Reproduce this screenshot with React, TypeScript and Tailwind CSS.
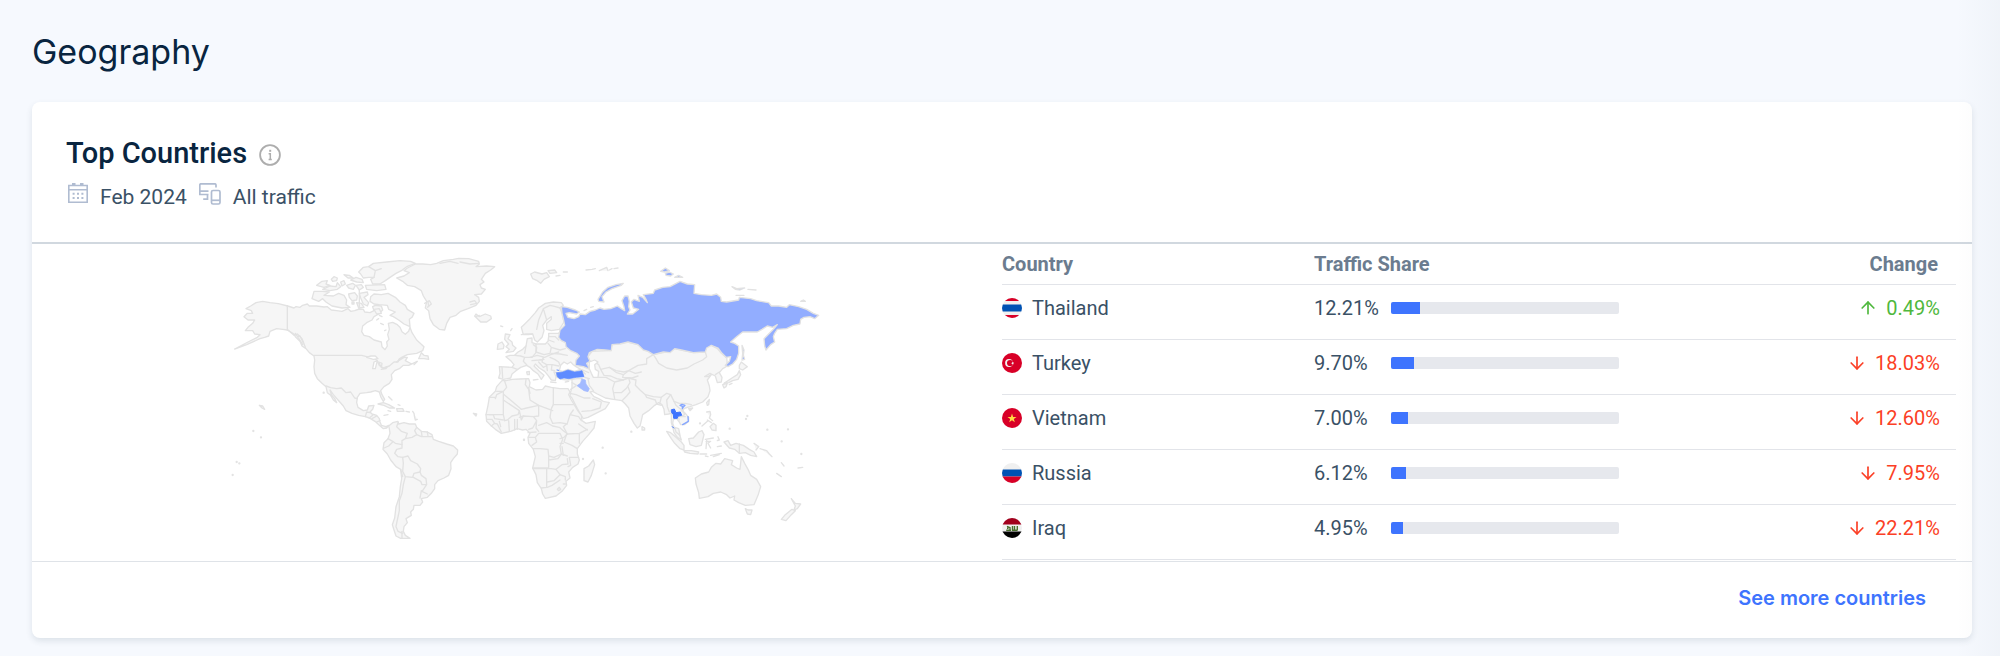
import React from 'react';
import { ArrowDown, ArrowUp } from 'lucide-react';

interface CountryRow {
  code: string;
  name: string;
  share: number;
  change: number;
}

const COUNTRIES: CountryRow[] = [
  { code: 'th', name: 'Thailand', share: 12.21, change: 0.49 },
  { code: 'tr', name: 'Turkey', share: 9.7, change: -18.03 },
  { code: 'vn', name: 'Vietnam', share: 7.0, change: -12.6 },
  { code: 'ru', name: 'Russia', share: 6.12, change: -7.95 },
  { code: 'iq', name: 'Iraq', share: 4.95, change: -22.21 },
];

const FLAGS: Record<string, React.ReactNode> = {
  th: (
    <>
      <rect width="20" height="20" fill="#f0f0f0" />
      <rect width="20" height="3" fill="#d80027" />
      <rect y="6.5" width="20" height="7" fill="#0052b4" />
      <rect y="17" width="20" height="3" fill="#d80027" />
    </>
  ),
  tr: (
    <>
      <rect width="20" height="20" fill="#d80027" />
      <circle cx="7" cy="10" r="3.9" fill="#f0f0f0" />
      <circle cx="8.1" cy="10" r="3.1" fill="#d80027" />
      <path d="M10.2 8.4l.6 1 1.2-.2-.7 1 .7 1-1.2-.3-.7.9-.1-1.2-1.1-.4 1.1-.5z" fill="#f0f0f0" />
    </>
  ),
  vn: (
    <>
      <rect width="20" height="20" fill="#d80027" />
      <path d="M10 5.600l1.100 3.300h3.400l-2.700 2 1 3.300-2.800-2-2.800 2 1-3.300-2.700-2h3.400z" fill="#ffda44" />
    </>
  ),
  ru: (
    <>
      <rect width="20" height="20" fill="#f0f0f0" />
      <rect y="6.5" width="20" height="7" fill="#0052b4" />
      <rect y="13.5" width="20" height="7" fill="#d80027" />
    </>
  ),
  iq: (
    <>
      <rect width="20" height="20" fill="#f0f0f0" />
      <rect width="20" height="6.5" fill="#a2001d" />
      <rect y="13.5" width="20" height="6.5" fill="#000" />
      <path
        d="M4.2 12.2H9M5 8.3l3 1.3v2.6M10.5 8v4.2h5M12.5 8v4.2M15.3 8v4.2M5 10.2h1.500"
        fill="none"
        stroke="#496e2d"
        strokeWidth="1.4"
      />
    </>
  ),
};

const Flag: React.FC<{ code: string }> = ({ code }) => (
  <svg viewBox="0 0 20 20" className="w-5 h-5 shrink-0" aria-hidden="true">
    <clipPath id={`flag-${code}`}>
      <circle cx="10" cy="10" r="10" />
    </clipPath>
    <g clipPath={`url(#flag-${code})`}>{FLAGS[code]}</g>
  </svg>
);

const InfoIcon: React.FC = () => (
  <svg viewBox="0 0 22 22" className="w-[22px] h-[22px]" fill="none" aria-hidden="true">
    <circle cx="11" cy="11" r="9.9" stroke="#adadad" strokeWidth="1.8" />
    <path d="M9.6 9.7h1.700v5.600M9.6 15.500h3.200" stroke="#adadad" strokeWidth="1.5" />
    <rect x="10.200" y="5.800" width="2" height="2" fill="#adadad" />
  </svg>
);

const CalendarIcon: React.FC = () => (
  <svg viewBox="0 0 20 20" className="w-5 h-5" aria-hidden="true">
    <path d="M.8 2.5h18.4v16.7H.8zM.8 6.8h18.4" fill="none" stroke="#b0bcd1" strokeWidth="1.6" />
    <path
      d="M4 0h3.5v2.5H4zM12 0h3.5v2.5H12zM4.6 9.800h2v2h-2zM9 9.800h2v2H9zM13.400 9.800h2v2h-2zM4.600 14h2v2h-2zM9 14h2v2H9zM13.400 14h2v2h-2z"
      fill="#b0bcd1"
    />
  </svg>
);

const DevicesIcon: React.FC = () => (
  <svg viewBox="0 0 22 22" className="w-[22px] h-[22px]" fill="none" stroke="#b0bcd1" strokeWidth="1.7" aria-hidden="true">
    <path d="M17 4.5V2a1.200 1.200 0 0 0-1.200-1.200H2A1.200 1.200 0 0 0 .8 2v9.500h8.700M.8 8.200h8.700M4.200 16.200h4.300v-4.500" />
    <rect x="12.5" y="7.5" width="8.500" height="13.500" rx="1.500" />
    <path d="M12.5 17.300H21" />
  </svg>
);

/* Americas, north of the tropics */
const NORTH_AMERICA = [
  'M128,184 150,188 175,191 203,198 222,204 228,200 240,202 248,196 262,192 268,198 290,198 312,201 322,200 334,210 350,212 366,214 384,206 392,214 404,212 418,207 430,208 434,216 450,218 462,212 458,200 466,196 484,198 488,210 476,222 462,230 456,240 440,248 428,258 425,275 432,286 448,290 462,300 484,306 486,320 495,329 502,318 500,306 507,298 503,284 508,268 505,250 518,247 532,254 540,262 546,275 556,283 566,274 570,262 576,278 590,300 612,320 608,332 590,340 562,344 545,352 530,366 552,352 562,352 556,362 575,372 592,364 566,376 550,376 538,386 524,392 514,404 516,418 508,430 492,440 482,452 486,464 494,478 490,484 482,470 478,456 466,452 452,456 440,458 420,460 412,472 410,488 414,502 430,512 442,510 446,498 462,496 458,508 450,516 456,522 470,526 478,536 480,546 484,556 498,560 506,556 500,564 490,566 478,556 465,544 448,534 436,530 416,526 396,520 378,512 370,498 354,480 340,464 330,450 334,464 344,476 350,488 340,480 332,466 322,458 318,440 306,430 292,416 284,400 282,380 284,360 282,348 268,338 258,326 246,318 240,304 226,290 222,282 202,270 188,268 170,266 150,274 146,288 134,292 120,296 80,314 44,327 84,306 112,292 120,284 104,282 98,272 76,272 84,262 98,250 104,240 84,240 72,230 82,220 98,220 94,212 78,206 92,198 108,188Z',
  'M586,72 608,72 632,74 650,70 670,62 700,58 716,55 746,56 776,64 778,72 768,80 800,78 824,80 812,90 796,100 784,118 792,126 780,134 784,144 796,148 784,162 764,164 776,172 778,184 768,196 744,206 722,214 708,226 690,232 680,250 674,270 658,268 640,254 630,236 626,212 616,204 620,184 610,168 604,152 584,140 562,136 548,124 530,114 552,108 568,98 552,92 562,84Z',
  'M416,96 430,82 446,80 460,70 500,66 540,62 572,64 586,70 560,80 544,92 528,100 510,112 496,122 480,132 458,132 452,118 462,112 446,112 430,114 422,102Z',
  'M452,170 462,162 484,164 504,160 526,172 540,186 556,196 562,208 582,220 576,232 568,238 570,260 552,252 536,240 520,230 510,226 526,216 506,208 502,196 478,194 462,192 450,184Z',
  'M282,154 308,154 328,156 312,166 340,168 356,160 372,166 380,180 378,194 390,202 366,204 336,198 318,186 308,176 296,184 276,176Z',
  'M290,136 306,124 322,122 318,132 330,136 312,142Z',
  'M334,118 342,110 352,114 350,122 338,124Z',
  'M372,104 388,106 400,114 384,114Z',
  'M392,120 408,112 426,118 430,128 410,126Z',
  'M308,148 330,138 348,140 352,128 362,140 352,148 330,152Z',
  'M362,126 372,122 376,132 366,138Z',
  'M380,136 398,130 406,136 400,148 386,144Z',
  'M408,136 424,134 430,142 418,150Z',
  'M436,136 494,134 498,148 470,152 440,148Z',
  'M386,162 404,158 412,168 410,180 396,182 388,172Z',
  'M418,160 442,156 444,164 432,172 446,188 442,198 430,192 422,174Z',
  'M410,188 424,190 432,202 416,204Z',
  'M396,186 402,186 402,192 396,192Z',
  'M462,208 478,206 484,220 470,222Z',
  'M470,240 476,236 M482,250 490,254 M494,272 498,270 M478,226 486,230',
  'M596,356 604,338 612,346 624,348 626,358 612,356Z',
  'M764,228 768,222 778,230 796,222 812,228 814,236 800,246 782,246 776,240Z',
  'M766,230 778,226 M590,366 582,374',
  'M474,492 490,488 506,494 524,504 508,504 492,496Z',
  'M530,506 548,506 552,514 532,514Z',
  'M504,512 512,514 M558,514 568,516 M492,526 504,524 M506,470 516,480 M534,494 540,496',
  'M578,514 582,520 584,532 586,540 592,538',
  'M118,496 128,498 134,508 126,504Z',
];

const NORTH_AMERICA_BORDERS = [
  'M202,197V270',
  'M204,270 222,286 232,282 246,296 256,322',
  'M226,280 238,298 248,314 M232,290 240,288 250,308',
  'M282,346H425L440,350 456,354 470,360 478,376 490,384 508,378 522,366 534,366 538,356 548,354',
  'M318,438 332,443 350,446 364,444 378,458 392,456 404,474 412,476',
  'M436,530 440,516 450,518 M448,534 458,526 M456,536 470,528 M470,546 480,542',
  'M418,150V208 M446,80 466,92 462,112 M466,92 484,86',
  'M614,190 628,182 634,192 622,202 M750,186 764,182 770,190 752,194',
  'M660,70 690,64 714,70 M720,66 750,72 776,70 M624,186 626,200',
];

const SOUTH_AMERICA =
  'M506,108 518,98 534,94 536,102 552,98 568,102 586,102 590,112 604,124 622,126 636,134 640,148 656,154 680,162 700,168 713,180 712,192 700,206 692,218 693,236 686,256 672,264 654,272 644,284 644,296 634,310 622,322 604,326 608,336 600,346 582,346 580,358 572,366 574,376 558,386 562,398 552,410 550,424 556,436 570,445 542,445 528,438 522,420 517,404 524,384 528,350 538,320 541,290 545,266 542,238 528,230 512,210 502,192 489,178 492,158 504,146 510,130 508,116Z';

const SOUTH_AMERICA_BORDERS = [
  'M534,98 530,110 544,124 562,130 556,146 546,152 546,164 M556,146 576,142 590,134 584,122 590,112',
  'M604,124 606,138 M622,126 624,138 M590,134 604,140 636,140',
  'M504,146 518,154 526,160 546,164 546,174 530,178 524,190 534,200 548,202 M492,174 506,168 518,156',
  'M548,202 564,198 572,212 592,222 602,236 600,246 582,250 578,262 556,260 548,244 550,220Z',
  'M556,260 550,284 546,310 538,332 538,362 532,390 528,410 534,424 548,430 M542,238 548,260',
  'M600,246 604,256 618,266 620,284 606,284 602,274 580,262 M620,284 606,304 622,312 M604,302 600,324',
  'M546,424V444',
];

const EURASIA =
  'M56,414 60,400 58,380 96,382 102,374 92,362 78,350 90,346 104,346 114,336 128,328 138,318 142,296 156,294 156,308 168,312 196,312 204,304 206,290 206,280 234,280 300,250 600,200 700,300 740,350 742,378 728,386 718,398 726,412 724,426 712,428 706,408 690,400 674,410 684,410 694,404 682,420 688,438 690,452 684,470 668,486 648,494 630,500 616,504 604,512 616,520 626,532 626,544 614,554 602,554 598,546 590,536 580,538 578,550 582,562 592,572 600,588 604,600 592,592 582,578 578,560 574,548 574,520 566,522 554,524 552,508 546,494 536,488 524,496 506,512 488,524 484,542 480,558 472,564 462,550 450,528 446,504 436,492 426,482 400,478 376,474 352,462 338,454 330,456 342,470 356,476 370,484 388,488 376,506 352,518 324,532 310,536 302,524 292,506 284,490 276,474 270,468 272,456 276,442 276,418 262,420 244,418 232,412 230,398 222,396 228,410 226,422 214,420 204,406 194,394 178,384 166,372 162,378 178,394 192,406 184,418 174,402 160,392 150,382 140,376 122,382 108,392 96,402 92,414 70,418Z';

const EURASIA_ISLANDS = [
  'M124,262 132,254 150,236 166,218 176,204 196,190 220,186 244,188 250,196 240,204 246,220 252,246 238,268 214,272 200,268 200,250 214,238 214,230 200,240 188,256 192,272 186,292 172,306 164,300 158,282 146,284 130,284Z',
  'M76,282 90,284 84,296 96,306 98,316 108,324 100,334 78,338 88,328 78,320 86,312 74,298Z',
  'M54,312 66,306 72,316 70,326 52,328Z',
  'M152,102 164,96 186,102 200,98 208,110 192,118 182,130 172,122 158,116Z',
  'M204,92 224,90 230,98 210,100Z',
  'M318,90 336,88 346,86 M358,92 380,82 384,92 M388,90 396,86 M402,86 414,84 M250,96 262,96 M228,108 240,106',
  'M140,396 148,394 148,404 142,404Z M160,420 174,418 M212,426 228,428 M256,426 266,424',
  'M768,166H792 M804,148 828,150 M62,258 68,260 M92,272 96,266',
  'M778,376 784,366 802,380 788,390 778,386Z',
  'M778,392 782,404 774,418 758,422 746,428 732,430 756,414 772,404Z',
  'M728,434 742,430 738,440 732,444Z',
  'M748,434 756,430',
  'M680,488 688,478 686,494 682,496Z',
  'M626,506 638,504 630,512Z',
  'M486,560 494,564 494,570 486,570Z',
];

const EURASIA_BORDERS = [
  'M124,284 138,282 158,282 M170,268 176,240 190,206 210,196 M190,206 200,240 M210,196 226,200 240,204',
  'M66,382 68,414 M96,382 112,388 M104,346 122,348 134,352 130,364 140,374 M138,318 134,340 M160,314 170,322 168,338 156,352 134,352',
  'M168,312 168,336 192,344 210,340 214,322 204,310 M206,290 226,290 236,300 M206,300 222,306 M214,322 240,330 256,326',
  'M150,352 172,346 194,352 212,344 236,336 M156,362 176,360 192,358 M210,352 224,358 236,366 240,376 M190,352 186,366 200,374 216,374 236,378',
  'M176,366 190,382 198,378 M200,374 202,392 M216,374 214,390 224,392 M214,340 240,342 262,346',
  'M282,386 308,390 326,398 M306,392 316,402 M314,412 328,416',
  'M324,350 336,334 392,332 396,314 444,306 474,314 520,344 500,356 500,372 474,376 446,392 432,396 408,392 388,382 362,388 356,374 344,366 330,364Z',
  'M520,344 550,338 584,326 640,338 676,336 680,350 668,360 642,372 622,384 590,390 560,384 536,370 528,356Z',
  'M362,388 372,406 392,408 410,416 430,420 M388,382 410,398 430,404 446,392 466,400 484,396',
  'M430,404 428,412 456,414 474,408 M356,412 378,412 404,426 398,446 404,476 M404,426 428,420 446,414 450,428 440,444 424,458 404,458',
  'M276,418 290,416 306,416 M276,428 290,436 M290,436 272,448 M324,416 328,436 340,452 M270,460 288,464 312,474 M312,474 330,474 M338,476 364,486 360,504 334,512 306,514',
  'M446,414 468,420 466,436 480,450 496,464 520,470 544,472 560,460 572,464 582,484 598,490 616,490 634,494',
  'M444,440 450,456 440,468 426,482 M496,464 500,472 526,480 M526,480 530,492 544,496 M544,472 540,488',
  'M572,464 560,480 562,500 568,516 M582,484 588,496 600,506 610,512 614,524 606,528 M574,520 590,520 598,540 M598,530 616,530',
  'M706,404 718,396 M738,352 724,340 712,326 694,316',
];

const RUSSIA = [
  'M244,200 262,202 286,210 298,216 290,222 268,218 258,220 264,232 282,236 296,230 300,222 316,224 330,214 346,210 360,204 372,208 392,206 412,198 424,206 434,212 432,200 426,182 434,168 444,168 448,184 446,200 450,210 442,222 458,222 476,208 460,204 454,186 462,178 478,184 474,166 488,172 502,188 498,178 490,164 520,160 524,150 548,142 570,140 600,124 622,132 644,134 642,160 664,164 694,166 710,162 722,172 724,184 740,186 776,180 778,172 812,176 830,182 866,188 874,198 896,198 920,202 928,194 956,200 980,208 1000,220 1016,226 1004,236 990,230 972,232 962,238 960,252 940,256 920,266 892,268 884,280 880,290 884,306 872,314 858,330 854,318 852,296 866,282 880,268 892,254 878,262 862,258 846,268 832,276 788,276 770,290 752,306 764,310 776,318 776,340 770,358 758,372 744,380 736,376 748,364 752,350 738,352 726,340 714,324 694,316 680,324 676,336 640,338 604,330 584,326 570,338 550,336 520,344 504,334 490,330 474,314 444,306 420,312 396,314 394,332 376,330 352,328 328,338 324,350 330,364 320,370 330,388 310,380 286,376 288,360 298,348 290,340 272,332 258,320 256,308 244,302 236,292 240,270 254,256 250,236 246,220Z',
  'M354,178 368,156 384,142 408,134 430,130 424,136 396,146 378,156 366,170 372,186 356,184Z',
  'M786,316 792,330 790,346 794,358 786,360 788,340Z',
  'M542,94 556,84 568,92 554,96Z',
  'M556,100 568,96 580,102 572,108 558,106Z',
  'M584,112 596,106 608,112Z',
  'M756,140 770,146 794,144 780,150 766,148Z',
  'M962,184 970,180 976,184Z',
  'M312,212 320,208 M332,202 340,200',
];

const AFRICA =
  'M66,2 78,2 96,-2 120,-3 146,-4 150,8 148,20 168,30 188,28 196,18 214,22 240,26 264,26 270,36 266,44 274,60 284,76 292,90 304,106 306,122 318,130 346,124 342,144 326,164 308,184 292,206 292,222 298,240 294,252 278,262 266,276 270,294 258,304 260,316 246,334 228,348 196,355 188,342 184,326 172,308 168,284 158,264 166,230 160,208 146,190 144,172 150,160 138,148 128,150 112,146 92,154 64,160 46,148 32,136 20,124 18,104 24,76 28,52 46,34 50,20Z';

const AFRICA_BORDERS = [
  'M74,4 80,22 70,34 50,44 46,56 M50,34H70V42L124,88 M28,52H46 M70,42V104H28',
  'M138,-2 136,14 146,28 150,60 176,76 M124,88 140,84 176,76 M146,22 150,40 M220,24V74 M220,74H280',
  'M70,60 118,92 114,104 96,108 82,120 74,122 M176,76V108L160,110 130,108 124,120 118,92 M220,74 214,86 210,112 218,130',
  'M176,76 218,92 M18,104 40,104 44,116 70,120 M20,118 36,118 44,130 34,138 M44,130 52,132 64,156 M58,124 62,140 M86,122 88,154 M104,118 104,150 M112,118 112,148 M70,104 74,122',
  'M130,108 118,112 M160,110 170,122 158,144 146,148 M170,122 168,144 176,154 M176,136 200,128 218,138 238,142 M218,130 240,128 262,132 M238,142 250,152 260,160',
  'M280,90 270,104 262,130 250,140 262,162 298,160 322,148 M270,104 296,110 304,122 M296,132 322,150 M260,162 252,186 276,196 292,206 M298,162V190',
  'M146,172H166L176,160 M166,172 170,186 156,196 M176,160 240,160 248,178 240,200 244,222 222,232 206,228 204,208 180,206 160,206',
  'M206,228V264L158,264 M158,266 200,266 214,266 M206,240 234,236 244,222 262,228 M200,268V322L184,324 M214,266 228,268 240,284 222,302 202,306',
  'M228,268 246,254 264,252 262,236 M240,284 256,290 256,300 M246,200 250,226 M268,232 272,256 264,260 M296,232 268,232 M240,176 252,172 262,162 M240,190 250,190',
  'M144,158 168,156 M202,322 216,316 240,300 M232,328 238,322 242,328 236,332Z M250,312H256',
];

const OCEANIA = [
  'M340,240 344,254 334,286 324,306 312,302 312,266 326,258Z',
  'M646,294 664,282 686,276 694,262 708,250 722,252 734,236 758,242 754,254 770,264 780,268 784,230 794,250 804,268 812,286 830,298 842,320 834,346 822,374 796,376 776,368 762,360 764,348 750,354 740,344 722,336 700,340 684,350 658,355 656,338 648,312Z',
  'M796,386 804,390 816,390 812,404 802,402Z',
  'M934,356 946,370 962,372 952,386 942,390 946,378Z',
  'M936,388 946,392 934,404 918,422 904,418 914,406Z',
  'M560,154 572,158 588,172 604,186 612,196 612,210 600,206 584,190 574,176Z',
  'M612,212 634,212 656,216 654,222 630,220 614,216Z',
  'M660,222 680,222 M676,228 684,230 M692,226 724,220 M700,230 718,224',
  'M626,176 640,174 656,156 666,152 672,164 668,180 664,196 648,200 630,194Z',
  'M676,178 700,174 M678,184 692,184 684,190 692,204 M680,180 678,206',
  'M714,170 718,180 712,182 M712,200 724,198',
  'M732,186 744,182 752,196 768,190 790,196 808,208 822,216 830,230 812,226 796,218 778,220 764,208 748,204Z',
  'M778,192V220',
  'M822,190 836,200 828,210 M840,206 860,212 868,222 876,230 M904,248 912,258 M890,280 904,290 M954,264 968,262',
  'M680,96 690,94 692,104 688,114 698,122 M666,138 684,122',
  'M690,140 700,130 708,136 708,152 696,150Z M682,120 694,128',
  'M584,142 596,146 600,166 588,156Z',
];

const SPECKS = [
  [454, 155],
  [368, 203],
  [377, 280],
  [132, 179],
  [309, 237],
  [802, 108],
  [798, 117],
  [749, 146],
  [862, 149],
  [924, 148],
  [905, 184],
  [964, 222],
  [660, 130],
];

const PACIFIC_SPECKS = [
  [100, 123],
  [123, 142],
  [50, 216],
  [58, 220],
  [38, 255],
  [912, 150],
  [311, 8],
];

const Shapes: React.FC<{ paths: string[] }> = ({ paths }) => (
  <>
    {paths.map((d) => (
      <path key={d} d={d} />
    ))}
  </>
);

const WorldMap: React.FC = () => (
  <svg
    viewBox="-48 12 1878 900"
    className="w-[626px] max-w-full h-auto"
    role="img"
    aria-label="Traffic by country"
    fill="#f6f6f6"
    stroke="#e2e2e2"
    strokeWidth="4"
    strokeLinejoin="round"
    strokeLinecap="round"
  >
    <Shapes paths={NORTH_AMERICA} />
    <g fill="none">
      <Shapes paths={NORTH_AMERICA_BORDERS} />
    </g>
    {/* Great Lakes */}
    <path d="M440,352 452,348 466,348 474,356 460,358Z M458,386 462,366 472,362 466,386Z M476,366 486,370 484,382Z M484,388 502,380 498,386Z" fill="#fff" />

    <g transform="translate(0 450)">
      <path d={SOUTH_AMERICA} />
      <g fill="none">
        <Shapes paths={SOUTH_AMERICA_BORDERS} />
      </g>
      {PACIFIC_SPECKS.map(([x, y]) => (
        <circle key={`${x}-${y}`} cx={x} cy={y} r="1.5" />
      ))}
      <path d="M760,70 770,72 768,78Z" />
    </g>

    <g transform="translate(780 0)">
      <path d={EURASIA} />
      <Shapes paths={EURASIA_ISLANDS} />
      <g fill="none">
        <Shapes paths={EURASIA_BORDERS} />
      </g>
      <g fill="#92adff">
        <Shapes paths={RUSSIA} />
      </g>
      {/* Black Sea, Caspian Sea */}
      <path d="M238,392 242,376 252,366 262,372 272,366 280,374 288,380 302,388 284,394 264,388 248,394Z" fill="#fff" />
      <path d="M328,366 344,360 354,366 344,374 346,388 356,394 354,412 340,412 334,400 328,386Z" fill="#fff" />
      <path
        d="M230,398 248,396 264,390 284,396 306,392 312,410 290,412 266,416 252,414 240,417 232,410Z"
        fill="#5f8bff"
        stroke="#5f8bff"
        strokeWidth="2"
      />
      <path d="M231,390 236,391" stroke="#5f8bff" strokeWidth="3" />
      <path d="M306,417 316,420 318,432 328,446 324,455 312,452 291,437 301,430Z" fill="#a3baff" stroke="#a3baff" strokeWidth="2" />
    </g>

    <g transform="translate(780 420)">
      <path d={AFRICA} />
      <g fill="none">
        <Shapes paths={AFRICA_BORDERS} />
      </g>
      <Shapes paths={OCEANIA} />
      {SPECKS.map(([x, y]) => (
        <circle key={`${x}-${y}`} cx={x} cy={y} r="1.5" />
      ))}
      <path
        d="M575,89 583,87 588,98 601,96 605,106 593,109 592,115 581,115 580,104 575,98Z M577,140 581,144"
        fill="#3e74fe"
        stroke="#3e74fe"
        strokeWidth="3"
      />
      <path d="M600,76 606,73 615,76 610,81 607,86 607,79Z M624,110 625,124 608,134" fill="none" stroke="#85a6ff" />
    </g>
  </svg>
);

const Change: React.FC<{ value: number }> = ({ value }) => {
  const up = value > 0;
  const Arrow = up ? ArrowUp : ArrowDown;
  return (
    <span className={`flex items-center justify-end gap-2 ${up ? 'text-[#4fb83d]' : 'text-[#fb3f26]'}`}>
      <Arrow className="w-5 h-5" strokeWidth={2} />
      {Math.abs(value).toFixed(2)}%
    </span>
  );
};

const CountriesTable: React.FC = () => (
  <table className="w-full table-fixed text-left text-xl leading-6 text-[#3a5166]">
    <thead>
      <tr className="h-10 border-b border-[#e2e4e9] text-[#6b7c8f]">
        <th scope="col" className="w-[312px] p-0 pb-2 align-bottom font-bold">Country</th>
        <th scope="col" className="w-[340px] p-0 pb-2 align-bottom font-bold">Traffic Share</th>
        <th scope="col" className="p-0 pr-[18px] pb-2 align-bottom text-right font-bold">Change</th>
      </tr>
    </thead>
    <tbody>
      {COUNTRIES.map((row) => (
        <tr key={row.code} className="h-[55px] border-b border-[#e2e4e9] align-top">
          <td className="p-0 pt-[11px]">
            <span className="flex items-center gap-2.5">
              <Flag code={row.code} />
              {row.name}
            </span>
          </td>
          <td className="p-0 pt-[11px]">
            <div className="flex items-center">
              <span className="w-[77px]">{row.share.toFixed(2)}%</span>
              <div className="h-3 w-[228px] overflow-hidden rounded-xs bg-[#e6e8ed]">
                <div className="h-full bg-[#3e74fe]" style={{ width: `calc(${row.share}% + 1px)` }}></div>
              </div>
            </div>
          </td>
          <td className="p-0 pt-[11px] pr-4">
            <Change value={row.change} />
          </td>
        </tr>
      ))}
    </tbody>
  </table>
);

export default function App() {
  return (
    <main className="relative min-h-screen bg-[#f6f9fe] pt-8 pr-7 pb-4 pl-8 font-[Roboto,sans-serif]">
      <h1 className="mb-[30px] font-[Inter,sans-serif] text-[34px] leading-10 font-normal text-[#092540]">Geography</h1>

      <section className="rounded-lg bg-white shadow-[0_3px_6px_rgba(42,62,82,0.12)]">
        <header className="border-b-2 border-[#d1d8df] px-[34px] pt-[35px] pb-[31px]">
          <div className="flex items-center gap-3">
            <h2 className="text-[29px] leading-8 font-medium text-[#092540]">Top Countries</h2>
            <button type="button" aria-label="About top countries" className="mt-1">
              <InfoIcon />
            </button>
          </div>
          <div className="mt-3.5 flex items-start text-[21px] leading-7 text-[#3a5166]">
            <span className="flex items-start gap-3 pl-[2px]">
              <CalendarIcon />
              Feb 2024
            </span>
            <span className="ml-3 flex items-start gap-3">
              <DevicesIcon />
              All traffic
            </span>
          </div>
        </header>

        <div className="grid grid-cols-2">
          <div className="flex items-start justify-center">
            <WorldMap />
          </div>
          <div className="pr-4 pb-px">
            <CountriesTable />
          </div>
        </div>

        <footer className="flex justify-end border-t border-[#dfe3e8] px-[46px] pt-[22px] pb-[26px]">
          <a href="#countries" className="font-[Inter,sans-serif] text-xl leading-7 font-semibold text-[#3e74fe]">
            See more countries
          </a>
        </footer>
      </section>

      {/* Soft edge on the right side of the page */}
      <div className="pointer-events-none absolute inset-y-0 right-0 w-11 bg-linear-to-r from-transparent to-[#2a3e52]/3"></div>
    </main>
  );
}
